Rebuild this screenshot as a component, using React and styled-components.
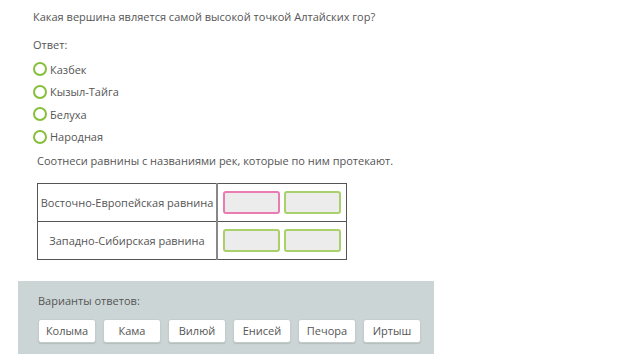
import React from 'react'
import styled, { createGlobalStyle } from 'styled-components'

const GlobalStyle = createGlobalStyle`
  body {
    margin: 0;
    background: #fff;
    font-family: "Open Sans", "Liberation Sans", sans-serif;
    color: #555;
  }
`

const options = ['Казбек', 'Кызыл-Тайга', 'Белуха', 'Народная']
const plains = ['Восточно-Европейская равнина', 'Западно-Сибирская равнина']
const rivers = ['Колыма', 'Кама', 'Вилюй', 'Енисей', 'Печора', 'Иртыш']

function App() {
  return (
    <Page>
      <GlobalStyle />
      <Question>Какая вершина является самой высокой точкой Алтайских гор?</Question>
      <Label>Ответ:</Label>
      <Options>
        {options.map((o) => (
          <Option key={o}>
            <Radio />
            <span>{o}</span>
          </Option>
        ))}
      </Options>
      <Task>Соотнеси равнины с названиями рек, которые по ним протекают.</Task>
      <Table>
        <tbody>
          {plains.map((p, i) => (
            <tr key={p}>
              <NameCell>{p}</NameCell>
              <SlotCell>
                <Slots>
                  <Slot $active={i === 0} />
                  <Slot />
                </Slots>
              </SlotCell>
            </tr>
          ))}
        </tbody>
      </Table>
      <Panel>
        <PanelTitle>Варианты ответов:</PanelTitle>
        <Chips>
          {rivers.map((r) => (
            <Chip key={r}>{r}</Chip>
          ))}
        </Chips>
      </Panel>
    </Page>
  )
}

export default App

const Page = styled.div`
  width: 640px;
  height: 360px;
  overflow: hidden;
  padding-top: 8px;
  box-sizing: border-box;
`

const Question = styled.div`
  margin-left: 33px;
  font-size: 11px;
  line-height: 18px;
`

const Label = styled.div`
  margin: 10px 0 0 33px;
  font-size: 11px;
  line-height: 18px;
`

const Options = styled.div`
  margin: 6px 0 0 33px;
  display: flex;
  flex-direction: column;
  gap: 4.5px;
`

const Option = styled.div`
  display: flex;
  align-items: center;
  height: 18px;
  font-size: 11px;
  gap: 3px;
`

const Radio = styled.span`
  width: 14px;
  height: 14px;
  box-sizing: border-box;
  border: 2px solid #86c03a;
  border-radius: 50%;
`

const Task = styled.div`
  margin: 6px 0 0 37px;
  font-size: 11px;
  line-height: 18px;
`

const Table = styled.table`
  margin: 13px 0 0 37px;
  border-collapse: collapse;
  border: 1px solid #555;
`

const NameCell = styled.td`
  width: 178px;
  height: 37px;
  padding: 0;
  border: 1px solid #555;
  border-right: 2px solid #888;
  text-align: center;
  font-size: 11px;
  white-space: nowrap;
`

const SlotCell = styled.td`
  width: 128px;
  padding: 0;
  border: 1px solid #555;
`

const Slots = styled.div`
  display: flex;
  justify-content: center;
  gap: 4px;
`

const Slot = styled.div`
  width: 57px;
  height: 23px;
  box-sizing: border-box;
  border-radius: 3px;
  background: #ececec;
  border: 2px solid ${(p) => (p.$active ? '#e97cb0' : '#a9d06b')};
`

const Panel = styled.div`
  margin: 21px 0 0 18px;
  width: 416px;
  height: 73px;
  box-sizing: border-box;
  background: #ccd5d5;
  padding: 12px 0 0 20px;
`

const PanelTitle = styled.div`
  font-size: 11px;
  line-height: 16px;
`

const Chips = styled.div`
  display: flex;
  gap: 7px;
  margin-top: 10px;
`

const Chip = styled.div`
  width: 58px;
  height: 24px;
  box-sizing: border-box;
  background: #fff;
  border-radius: 3px;
  border: 1px solid #c4cccc;
  box-shadow: 0 1px 1px rgba(0, 0, 0, 0.12);
  display: flex;
  align-items: center;
  justify-content: center;
  font-size: 11px;
`
